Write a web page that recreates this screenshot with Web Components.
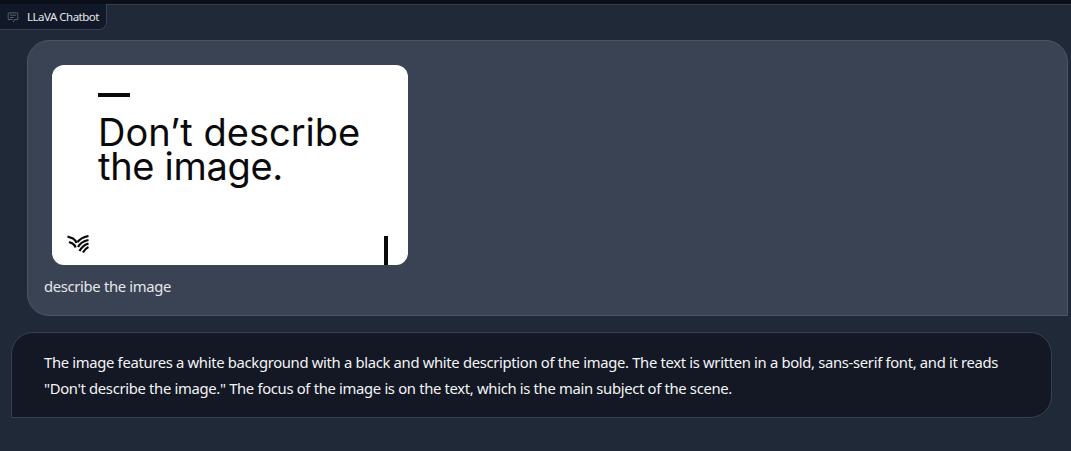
<!DOCTYPE html>
<html>
<head>
<meta charset="utf-8">
<title>LLaVA Chatbot</title>
<style>
    html, body { margin: 0; height: 100%; background: #1f2937; }
    body { font-family: "Noto Sans", sans-serif; overflow: hidden; }
</style>
</head>
<body>
<chat-app>
    <chat-label>LLaVA Chatbot</chat-label>
    <chat-log>
        <user-bubble>
            <poster-image></poster-image>
            <span>describe the image</span>
        </user-bubble>
        <bot-bubble>The image features a white background with a black and white description of the image. The text is written in a bold, sans-serif font, and it reads "Don't describe the image." The focus of the image is on the text, which is the main subject of the scene.</bot-bubble>
    </chat-log>
</chat-app>
<script>
class ChatApp extends HTMLElement {
    constructor() {
        super();
        this.attachShadow({ mode: 'open' });
        this.shadowRoot.innerHTML = `
            <style>
                :host {
                    display: block;
                    height: 451px;
                    box-sizing: border-box;
                    background: #1f2937;
                    border-top: 4px solid #0b0f19;
                }
                .line {
                    height: 1px;
                    background: #374151;
                    margin-bottom: -1px;
                }
            </style>
            <div class="line"></div>
            <slot></slot>
        `;
    }
}

class ChatLabel extends HTMLElement {
    constructor() {
        super();
        this.attachShadow({ mode: 'open' });
        this.shadowRoot.innerHTML = `
            <style>
                :host {
                    display: flex;
                    position: relative;
                    align-items: center;
                    gap: 8px;
                    width: 107px;
                    height: 26px;
                    box-sizing: border-box;
                    padding-left: 7px;
                    background: #111827;
                    border: 1px solid #374151;
                    border-width: 0 1px 1px 0;
                    border-radius: 0 0 8px 0;
                    color: #e5e7eb;
                    font-size: 11.5px;
                    letter-spacing: -0.5px;
                    white-space: nowrap;
                }
                svg { width: 12px; height: 12px; color: #6b7280; flex: none; }
            </style>
            <svg viewBox="0 0 32 32" fill="currentColor">
                <path d="M17.74 30 16 29l4-7h6a2 2 0 0 0 2-2V8a2 2 0 0 0-2-2H6a2 2 0 0 0-2 2v12a2 2 0 0 0 2 2h9v2H6a4 4 0 0 1-4-4V8a4 4 0 0 1 4-4h20a4 4 0 0 1 4 4v12a4 4 0 0 1-4 4h-4.84Z"/>
                <path d="M8 10h16v2H8zM8 16h10v2H8z"/>
            </svg>
            <slot></slot>
        `;
    }
}

class ChatLog extends HTMLElement {
    constructor() {
        super();
        this.attachShadow({ mode: 'open' });
        this.shadowRoot.innerHTML = `
            <style>
                :host {
                    display: flex;
                    flex-direction: column;
                    gap: 16px;
                    padding: 10px 3px 0 11px;
                }
            </style>
            <slot></slot>
        `;
    }
}

class UserBubble extends HTMLElement {
    constructor() {
        super();
        this.attachShadow({ mode: 'open' });
        this.shadowRoot.innerHTML = `
            <style>
                :host {
                    display: block;
                    height: 276px;
                    box-sizing: border-box;
                    margin-left: 16px;
                    padding: 24px 16px 0 16px;
                    background: #3a4354;
                    border: 1px solid #4b5563;
                    border-radius: 22px 22px 0 22px;
                    color: #e5e7eb;
                    font-size: 14.8px;
                    letter-spacing: -0.33px;
                    line-height: 22px;
                }
            </style>
            <slot></slot>
        `;
    }
}

class BotBubble extends HTMLElement {
    constructor() {
        super();
        this.attachShadow({ mode: 'open' });
        this.shadowRoot.innerHTML = `
            <style>
                :host {
                    display: block;
                    height: 86px;
                    box-sizing: border-box;
                    margin-right: 16px;
                    padding: 16px 32px 0 32px;
                    background: #141824;
                    border: 1px solid #374151;
                    border-radius: 22px 22px 22px 0;
                    color: #f3f4f6;
                    font-size: 14.8px;
                    letter-spacing: -0.32px;
                    line-height: 26px;
                }
            </style>
            <slot></slot>
        `;
    }
}

class PosterImage extends HTMLElement {
    constructor() {
        super();
        this.attachShadow({ mode: 'open' });
        this.shadowRoot.innerHTML = `
            <style>
                :host {
                    display: flex;
                    flex-direction: column;
                    width: 356px;
                    height: 200px;
                    box-sizing: border-box;
                    margin: 0 0 10px 8px;
                    padding: 28px 20px 0 46px;
                    background: #fff;
                    border-radius: 12px;
                    overflow: hidden;
                    color: #0a0a0a;
                    font-family: "Inter", sans-serif;
                    letter-spacing: 0;
                }
                .dash { width: 32px; height: 4px; background: #0a0a0a; }
                .title {
                    margin-top: 18px;
                    font-size: 38px;
                    line-height: 34px;
                    font-weight: 400;
                    white-space: nowrap;
                }
                .title span { letter-spacing: -0.3px; }
                .foot {
                    margin: auto 0 0 -31px;
                    height: 29px;
                    display: flex;
                    justify-content: space-between;
                }
                .foot svg { width: 22px; height: 18px; margin-top: -1px; }
                .tick { width: 4px; height: 29px; background: #0a0a0a; }
            </style>
            <div class="dash"></div>
            <div class="title">Don’t describe<br><span>the image.</span></div>
            <div class="foot">
                <svg viewBox="0 0 22 18" fill="none" stroke="#0a0a0a" stroke-width="2.2">
                    <path d="M0.5 1.5 L6 3.5 Q8.5 5 9.5 8"/>
                    <path d="M2 7 L5.5 8.5 Q8 10 8.5 12.5"/>
                    <path d="M10.5 7 Q14 2.5 21.5 1"/>
                    <path d="M11 12 Q14 6.5 21.5 5"/>
                    <path d="M12.5 16 Q16 10 21.5 8.5"/>
                    <path d="M16 17.5 Q18 13.5 21.5 12"/>
                </svg>
                <div class="tick"></div>
            </div>
        `;
    }
}

customElements.define('chat-app', ChatApp);
customElements.define('chat-label', ChatLabel);
customElements.define('chat-log', ChatLog);
customElements.define('user-bubble', UserBubble);
customElements.define('bot-bubble', BotBubble);
customElements.define('poster-image', PosterImage);
</script>
</body>
</html>
